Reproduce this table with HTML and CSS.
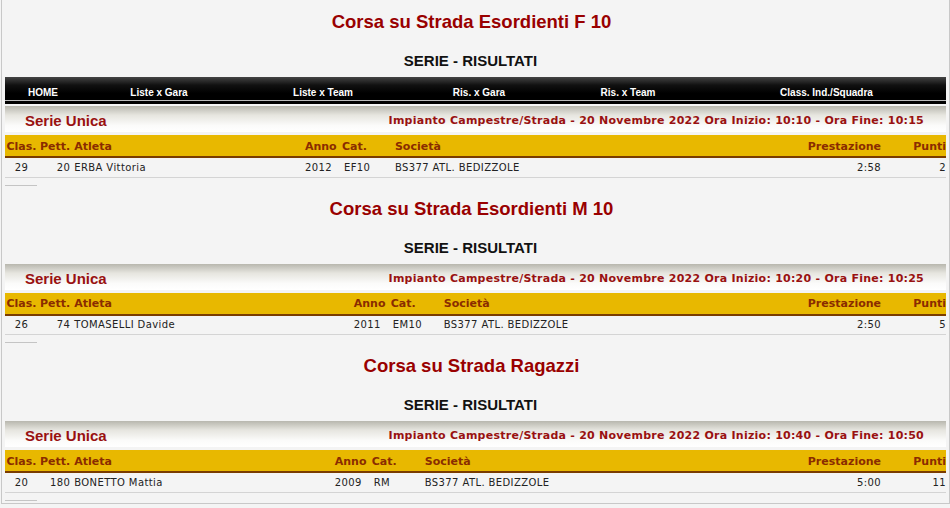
FILE: index.html
```html
<!DOCTYPE html>
<html lang="it">
<head>
    <meta charset="UTF-8">
    <title>Corsa su Strada - Serie Risultati</title>
    <link rel="stylesheet" href="styles.css">
</head>
<body>
    <div class="page">
        <h2 class="gara">Corsa su Strada Esordienti F 10</h2>
        <h3 class="sub">SERIE - RISULTATI</h3>
        <div class="nav">
            <a href="#">HOME</a>
            <a href="#">Liste x Gara</a>
            <a href="#">Liste x Team</a>
            <a href="#">Ris. x Gara</a>
            <a href="#">Ris. x Team</a>
            <a href="#">Class. Ind./Squadra</a>
        </div>
        <div class="serie">
            <span class="serie-name">Serie Unica</span>
            <span class="serie-info">Impianto Campestre/Strada - 20 Novembre 2022 Ora Inizio: 10:10 - Ora Fine: 10:15</span>
        </div>
        <table class="ris">
            <tr>
                <th class="clas">Clas.</th><th class="pett">Pett.</th><th>Atleta</th><th class="anno">Anno</th><th class="cat">Cat.</th><th>Società</th><th class="prest">Prestazione</th><th class="punti">Punti</th>
            </tr>
            <tr>
                <td class="c">29</td><td class="r">20</td><td>ERBA Vittoria</td><td>2012</td><td class="ind">EF10</td><td>BS377 ATL. BEDIZZOLE</td><td class="r">2:58</td><td class="r">2</td>
            </tr>
        </table>
        <div class="sep"></div>

        <h2 class="gara">Corsa su Strada Esordienti M 10</h2>
        <h3 class="sub">SERIE - RISULTATI</h3>
        <div class="serie">
            <span class="serie-name">Serie Unica</span>
            <span class="serie-info">Impianto Campestre/Strada - 20 Novembre 2022 Ora Inizio: 10:20 - Ora Fine: 10:25</span>
        </div>
        <table class="ris">
            <tr>
                <th class="clas">Clas.</th><th class="pett">Pett.</th><th>Atleta</th><th class="anno">Anno</th><th class="cat">Cat.</th><th>Società</th><th class="prest">Prestazione</th><th class="punti">Punti</th>
            </tr>
            <tr>
                <td class="c">26</td><td class="r">74</td><td>TOMASELLI Davide</td><td>2011</td><td class="ind">EM10</td><td>BS377 ATL. BEDIZZOLE</td><td class="r">2:50</td><td class="r">5</td>
            </tr>
        </table>
        <div class="sep"></div>

        <h2 class="gara">Corsa su Strada Ragazzi</h2>
        <h3 class="sub">SERIE - RISULTATI</h3>
        <div class="serie">
            <span class="serie-name">Serie Unica</span>
            <span class="serie-info">Impianto Campestre/Strada - 20 Novembre 2022 Ora Inizio: 10:40 - Ora Fine: 10:50</span>
        </div>
        <table class="ris">
            <tr>
                <th class="clas">Clas.</th><th class="pett">Pett.</th><th>Atleta</th><th class="anno">Anno</th><th class="cat">Cat.</th><th>Società</th><th class="prest">Prestazione</th><th class="punti">Punti</th>
            </tr>
            <tr>
                <td class="c">20</td><td class="r">180</td><td>BONETTO Mattia</td><td>2009</td><td class="ind">RM</td><td>BS377 ATL. BEDIZZOLE</td><td class="r">5:00</td><td class="r">11</td>
            </tr>
        </table>
        <div class="sep"></div>
    </div>
</body>
</html>
```

FILE: styles.css
```css
* {
    box-sizing: border-box;
}

body {
    margin: 0;
    background: #f4f4f4;
    font-family: "DejaVu Sans", Verdana, sans-serif;
    font-size: 10px;
    color: #222;
}

.page {
    width: 949px;
    height: 504px;
    margin-left: 1px;
    padding: 0 3px;
    border-left: 1px solid #c8c8c8;
    border-right: 1px solid #c8c8c8;
    border-bottom: 1px solid #c8c8c8;
    overflow: hidden;
}

.gara {
    margin: 0;
    height: 44px;
    padding-right: 8px;
    line-height: 44px;
    text-align: center;
    font-family: "Liberation Sans", Arial, sans-serif;
    font-size: 18.5px;
    font-weight: bold;
    color: #990000;
}

.sub {
    margin: 0;
    height: 33px;
    padding-right: 10px;
    line-height: 34px;
    text-align: center;
    font-family: "Liberation Sans", Arial, sans-serif;
    font-size: 15px;
    font-weight: bold;
    color: #111;
}

.nav {
    display: grid;
    grid-template-columns: 76px 156px 172px 140px 158px 1fr;
    height: 27px;
    margin-bottom: 2px;
    background: linear-gradient(#444 0%, #111 30%, #000 60%, #000 85%, #bbb 86%, #bbb 89%, #000 90%);
}

.nav a {
    text-align: center;
    line-height: 31px;
    color: #fff;
    font-family: "Liberation Sans", Arial, sans-serif;
    font-size: 10px;
    font-weight: bold;
    text-decoration: none;
}

.serie {
    display: flex;
    justify-content: space-between;
    align-items: center;
    height: 26px;
    padding: 3px 22px 0 20px;
    background: linear-gradient(#b8b7ae 0%, #e6e5df 35%, #fbfbfa 75%, #fff 100%);
    color: #991111;
    font-weight: bold;
}

.serie-name {
    font-family: "Liberation Sans", Arial, sans-serif;
    font-size: 15px;
}

.serie-info {
    font-size: 11px;
    letter-spacing: 0.25px;
}

.ris {
    width: 100%;
    margin-top: 3px;
    border-collapse: collapse;
}

.ris th {
    height: 22px;
    padding: 1px 2px 0;
    background: #e8b800;
    border-bottom: 2px solid #7a3c00;
    color: #8a2c00;
    font-size: 11px;
    font-weight: bold;
    text-align: left;
    white-space: nowrap;
}

.ris td {
    height: 20px;
    padding: 0 2px;
    border-bottom: 1px solid #d4d4d4;
    letter-spacing: 0.4px;
    white-space: nowrap;
}

.ris .clas {
    width: 33px;
    padding: 1px 0 0;
    text-align: center;
}

.ris .pett {
    width: 33px;
    text-align: right;
}

.ris .anno {
    width: 37px;
}

.ris .cat {
    width: 53px;
}

.ris .prest {
    width: 98px;
    text-align: right;
}

.ris .punti {
    width: 63px;
    padding-right: 0;
    text-align: right;
}

.ris .c {
    text-align: center;
}

.ris .r {
    text-align: right;
}

.ris td:last-child {
    padding-right: 0;
}

.ris .ind {
    padding-left: 4px;
}

.sep {
    width: 32px;
    margin: 7px 0 1px;
    border-top: 1px solid #c4c4c4;
}
```
